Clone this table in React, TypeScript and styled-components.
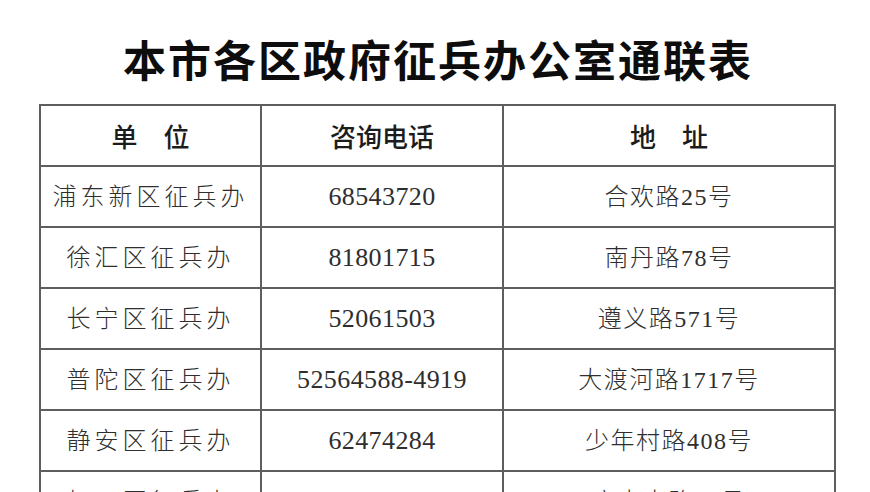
import React from "react";
import styled, { createGlobalStyle } from "styled-components";

const GlobalStyle = createGlobalStyle`
  html, body {
    margin: 0;
    padding: 0;
    background: #ffffff;
  }
  body {
    font-family: "Liberation Serif", "Noto Sans CJK SC", serif;
  }
`;

const rows = [
  { unit: "浦东新区征兵办", phone: "68543720", addr: "合欢路25号" },
  { unit: "徐汇区征兵办", phone: "81801715", addr: "南丹路78号" },
  { unit: "长宁区征兵办", phone: "52061503", addr: "遵义路571号" },
  { unit: "普陀区征兵办", phone: "52564588-4919", addr: "大渡河路1717号" },
  { unit: "静安区征兵办", phone: "62474284", addr: "少年村路408号" },
  { unit: "虹口区征兵办", phone: "56700771", addr: "广中中路30号" },
];

function App() {
  return (
    <Page>
      <GlobalStyle />
      <Title>本市各区政府征兵办公室通联表</Title>
      <Table>
        <colgroup>
          <col style={{ width: 221 }} />
          <col style={{ width: 242 }} />
          <col style={{ width: 332 }} />
        </colgroup>
        <thead>
          <tr>
            <HeadCell>单　位</HeadCell>
            <HeadCell>咨询电话</HeadCell>
            <HeadCell>地　址</HeadCell>
          </tr>
        </thead>
        <tbody>
          {rows.map((r) => (
            <tr key={r.unit}>
              <Cell $spacing={4}>{r.unit}</Cell>
              <Cell $spacing={0.4} $digits>
                {r.phone}
              </Cell>
              <Cell $spacing={1.5}>{r.addr}</Cell>
            </tr>
          ))}
        </tbody>
      </Table>
    </Page>
  );
}

export default App;

const Page = styled.div`
  width: 870px;
  height: 492px;
  overflow: hidden;
  padding-top: 30px;
  box-sizing: border-box;
  display: flex;
  flex-direction: column;
  align-items: center;
`;

const Title = styled.h1`
  margin: 0 0 18px 0;
  height: 56px;
  line-height: 56px;
  font-family: "Noto Sans CJK SC", sans-serif;
  font-weight: 700;
  font-size: 43px;
  letter-spacing: 2px;
  color: #0d0d0d;
  transform: translateX(3px);
`;

const Table = styled.table`
  width: 796px;
  margin-left: 5px;
  border-collapse: collapse;
  table-layout: fixed;
  color: #2e2e2e;
`;

const HeadCell = styled.th`
  height: 59px;
  padding: 0;
  border: 2px solid #5e5e5e;
  font-family: "Noto Sans CJK SC", sans-serif;
  font-weight: 500;
  font-size: 26px;
  text-align: center;
  vertical-align: middle;
  color: #1c1c1c;
`;

const Cell = styled.td<{ $spacing: number; $digits?: boolean }>`
  height: 59px;
  padding: 0;
  border: 2px solid #5e5e5e;
  font-family: "Liberation Serif", "Noto Sans CJK SC", serif;
  font-size: ${(p) => (p.$digits ? 26 : 24)}px;
  font-weight: 300;
  letter-spacing: ${(p) => p.$spacing}px;
  text-align: center;
  vertical-align: middle;
  white-space: nowrap;
  line-height: 1;
`;
